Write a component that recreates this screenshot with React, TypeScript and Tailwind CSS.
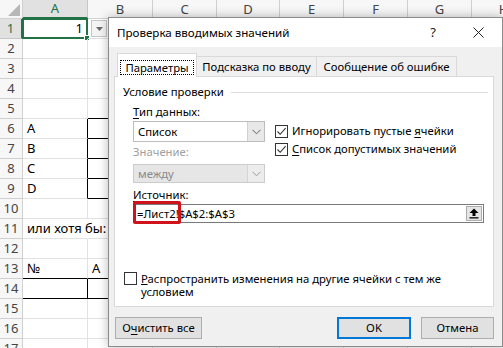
import React from 'react';

const colLetters = ['A', 'B', 'C', 'D', 'E', 'F', 'G', 'H'];
const rows = Array.from({ length: 17 }, (_, i) => i + 1);

const data: Record<string, string> = {
  A1: '1',
  A6: 'A',
  A7: 'B',
  A8: 'C',
  A9: 'D',
  A11: 'или хотя бы:',
  A13: '№',
  B13: 'A',
};

const rightOverride: Record<string, string> = {
  A6: 'border-r-black',
  A7: 'border-r-black',
  A8: 'border-r-black',
  A9: 'border-r-black',
  A11: 'border-r-transparent',
  A14: 'border-r-black',
};
const bottomOverride: Record<string, string> = {
  B5: 'border-b-black',
  B6: 'border-b-black',
  B7: 'border-b-black',
  B8: 'border-b-black',
  B9: 'border-b-black',
  A13: 'border-b-black',
  B13: 'border-b-black',
  A14: 'border-b-black',
  B14: 'border-b-black',
};

function Chevron({ color = '#606060' }: { color?: string }) {
  return (
    <svg width="9" height="6" viewBox="0 0 9 6">
      <path d="M0.5 0.8 L4.5 4.8 L8.5 0.8" fill="none" stroke={color} strokeWidth="1" />
    </svg>
  );
}

function CheckBox({ checked }: { checked: boolean }) {
  return (
    <div className="w-[13px] h-[13px] border border-[#333333] bg-white flex items-center justify-center shrink-0">
      {checked && (
        <svg width="11" height="11" viewBox="0 0 11 11">
          <path d="M1.5 5.5 L4.2 8.3 L9.6 2.2" fill="none" stroke="#333333" strokeWidth="1.1" />
        </svg>
      )}
    </div>
  );
}

function Sheet() {
  return (
    <div className="grid grid-cols-[23px_65px_65px_64px_63px_64px_64px_64px_64px] grid-rows-[19px_repeat(17,20px)] font-['Noto_Sans',sans-serif] text-[13px] text-black">
      <div className="bg-[#f7f7f7] border-r border-b border-r-[#d0d0d0] border-b-[#d0d0d0] flex items-end justify-end p-[2px]">
        <svg width="12" height="12" viewBox="0 0 12 12">
          <polygon points="12,0 12,12 0,12" fill="#b7b7b7" />
        </svg>
      </div>
      {colLetters.map((l) => (
        <div
          key={l}
          className={
            l === 'A'
              ? 'bg-[#e1e1e1] border-r border-r-[#c6c6c6] border-b-2 border-b-[#217346] flex items-center justify-center text-[#217346] text-[13px] leading-none'
              : 'bg-[#f7f7f7] border-r border-b border-r-[#d0d0d0] border-b-[#d0d0d0] flex items-center justify-center text-[#444444] text-[13px] leading-none'
          }
        >
          {l}
        </div>
      ))}
      {rows.map((r) => (
        <React.Fragment key={r}>
          <div
            className={
              r === 1
                ? 'bg-[#e1e1e1] border-r-2 border-r-[#217346] border-b border-b-[#c6c6c6] flex items-center justify-center text-[#217346] leading-none'
                : 'bg-[#f7f7f7] border-r border-b border-r-[#d0d0d0] border-b-[#d0d0d0] flex items-center justify-center text-[#444444] leading-none'
            }
          >
            {r}
          </div>
          {colLetters.map((c) => {
            const key = `${c}${r}`;
            const rc = rightOverride[key] ?? 'border-r-[#e1e1e1]';
            const bc = bottomOverride[key] ?? 'border-b-[#e1e1e1]';
            const isA1 = key === 'A1';
            return (
              <div
                key={key}
                className={`relative border-r border-b ${rc} ${bc} flex items-center whitespace-nowrap leading-none ${
                  isA1 ? 'justify-end pr-[4px]' : 'pl-[4px]'
                }`}
              >
                {data[key] && <span className="relative z-10">{data[key]}</span>}
                {isA1 && (
                  <>
                    <div className="absolute -left-[1px] -top-[1px] -right-[1px] -bottom-[1px] border-2 border-[#217346]" />
                    <div className="absolute -right-[3px] -bottom-[3px] w-[6px] h-[6px] bg-[#217346] border border-white" />
                  </>
                )}
                {key === 'B1' && (
                  <div className="absolute left-[3px] top-[1px] w-[16px] h-[17px] border border-[#c6c6c6] bg-[#f4f4f4] flex items-center justify-center">
                    <svg width="7" height="4" viewBox="0 0 7 4">
                      <polygon points="0,0 7,0 3.5,4" fill="#6b6b6b" />
                    </svg>
                  </div>
                )}
              </div>
            );
          })}
        </React.Fragment>
      ))}
    </div>
  );
}

function Dialog() {
  return (
    <div className="absolute left-[108px] top-[17px] w-[395px] h-[330px] bg-[#f0f0f0] border border-[#8c8c8c] shadow-[0_0_10px_rgba(0,0,0,0.28)] flex flex-col font-['Noto_Sans',sans-serif] text-[11.3px] text-black">
      <div className="h-[29px] bg-white flex items-center pl-[8px] pr-[9px] shrink-0">
        <span className="leading-none text-[11.6px]">Проверка вводимых значений</span>
        <div className="ml-auto w-[30px] flex justify-center text-[13px] leading-none text-[#222]">?</div>
        <div className="ml-[15px] w-[30px] flex justify-center">
          <svg width="11" height="11" viewBox="0 0 11 11">
            <path d="M0.5 0.5 L10.5 10.5 M10.5 0.5 L0.5 10.5" stroke="#222" strokeWidth="1" />
          </svg>
        </div>
      </div>
      <div className="flex-1 flex flex-col pl-[5px] pr-[8px]">
        <div className="flex items-end h-[29px] pl-[3px] shrink-0">
          <div className="relative z-10 -mb-[1px] h-[24px] w-[80px] bg-white border-l border-t border-r border-[#d9d9d9] flex items-start justify-center pt-[6px]">
            <div className="border border-dotted border-black px-[4px] h-[15px] flex items-center leading-none">
              Параметры
            </div>
          </div>
          <div className="h-[20px] w-[120px] bg-[#f0f0f0] border-t border-r border-[#d9d9d9] flex items-center justify-center leading-none">
            Подсказка по вводу
          </div>
          <div className="h-[20px] w-[140px] bg-[#f0f0f0] border-t border-r border-[#d9d9d9] flex items-center justify-center leading-none">
            Сообщение об ошибке
          </div>
        </div>
        <div className="h-[231px] bg-white border border-[#d9d9d9] flex flex-col shrink-0">
          <div className="mt-[7px] flex items-center pl-[8px] pr-[5px] h-[16px]">
            <span className="leading-none">Условие проверки</span>
            <div className="flex-1 h-px bg-[#dcdcdc] ml-[7px]" />
          </div>
          <div className="pl-[18px]">
            <div className="mt-[4px] h-[16px] flex items-center leading-none">
              <span>
                <span className="underline underline-offset-2">Т</span>ип данных:
              </span>
            </div>
            <div className="mt-[1px] flex">
              <div className="w-[132px] flex flex-col">
                <div className="h-[21px] border border-[#bcbcbc] bg-white flex">
                  <div className="flex-1 flex items-center pl-[4px] leading-none">Список</div>
                  <div className="w-[17px] bg-[#e8e8e8] border-l border-[#d0d0d0] flex items-center justify-center">
                    <Chevron />
                  </div>
                </div>
                <div className="mt-[2px] h-[16px] flex items-center leading-none text-[#a0a0a0]">Значение:</div>
                <div className="mt-[4px] h-[19px] border border-[#cccccc] bg-[#e6e6e6] flex">
                  <div className="flex-1 flex items-center pl-[4px] leading-none text-[#8a8a8a]">между</div>
                  <div className="w-[17px] bg-[#ececec] border-l border-[#d4d4d4] flex items-center justify-center">
                    <Chevron color="#9a9a9a" />
                  </div>
                </div>
              </div>
              <div className="ml-[10px] pt-[1px] flex flex-col">
                <div className="h-[18px] flex items-center gap-[4px] leading-none">
                  <CheckBox checked />
                  <span>
                    Игнорировать пустые <span className="underline underline-offset-2">я</span>чейки
                  </span>
                </div>
                <div className="h-[18px] flex items-center gap-[4px] leading-none">
                  <CheckBox checked />
                  <span>
                    <span className="underline underline-offset-2">С</span>писок допустимых значений
                  </span>
                </div>
              </div>
            </div>
            <div className="mt-[4px] h-[16px] flex items-center leading-none">
              <span>
                <span className="underline underline-offset-2">И</span>сточник:
              </span>
            </div>
            <div className="relative mt-[1px] h-[19px] w-[351px] border border-[#7a7a7a] bg-white flex items-center">
              <span className="pl-[3px] leading-none">=Лист2!$A$2:$A$3</span>
              <div className="ml-auto mr-[1px] w-[16px] h-[15px] bg-[#e5e5e5] border border-[#adadad] flex items-center justify-center">
                <svg width="10" height="11" viewBox="0 0 10 11">
                  <polygon points="5,0.5 9.5,5 6.5,5 6.5,8 3.5,8 3.5,5 0.5,5" fill="#000" />
                  <rect x="0.5" y="9.2" width="9" height="1.3" fill="#000" />
                </svg>
              </div>
              <div className="absolute -left-[1px] -top-[4px] w-[48px] h-[23px] border-[3px] border-[#d0121b] rounded-[2px]" />
            </div>
          </div>
          <div className="mt-auto mb-[8px] pl-[9px] flex items-start gap-[4px]">
            <CheckBox checked={false} />
            <div className="leading-[13px]">
              <span className="underline underline-offset-1">Р</span>аспространить изменения на другие ячейки с тем же
              <br />
              условием
            </div>
          </div>
        </div>
        <div className="mt-[10px] flex pl-[1px]">
          <div className="h-[22px] w-[87px] bg-[#e1e1e1] border border-[#adadad] flex items-center justify-center leading-none">
            <span>
              О<span className="underline underline-offset-2">ч</span>истить все
            </span>
          </div>
          <div className="ml-auto h-[22px] w-[74px] bg-[#e1e1e1] border-2 border-[#0078d7] flex items-center justify-center leading-none">
            OK
          </div>
          <div className="ml-[10px] h-[22px] w-[73px] bg-[#e1e1e1] border border-[#adadad] flex items-center justify-center leading-none">
            Отмена
          </div>
        </div>
      </div>
    </div>
  );
}

export default function App() {
  return (
    <div className="relative w-[503px] h-[348px] overflow-hidden bg-white">
      <Sheet />
      <Dialog />
    </div>
  );
}
